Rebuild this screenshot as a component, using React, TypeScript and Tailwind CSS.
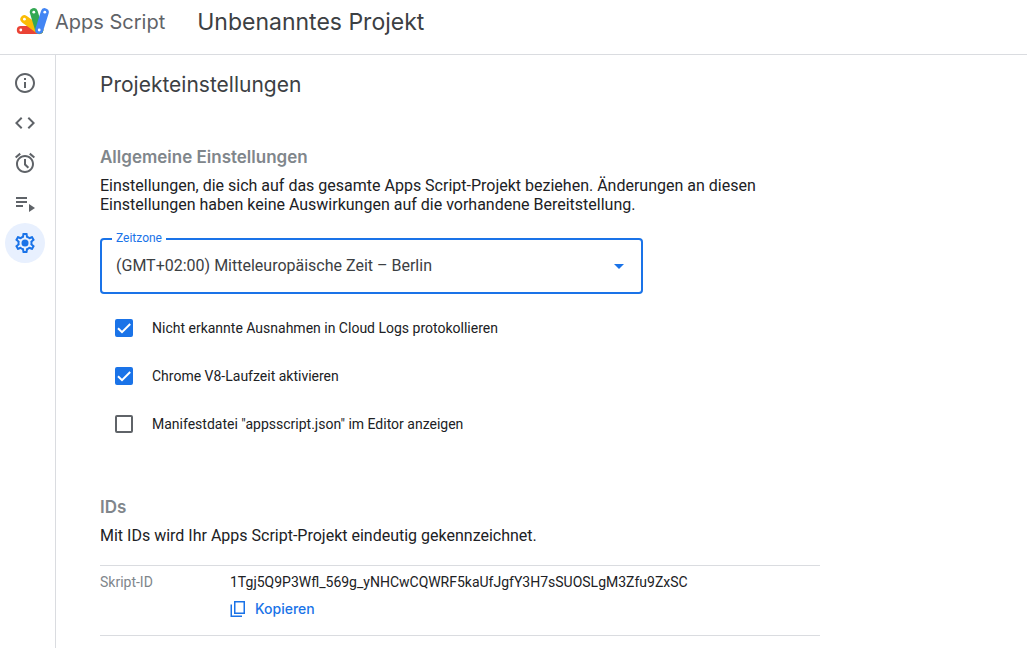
import { useState } from "react";
import type { ReactNode } from "react";

function Icon({ children, className = "size-6" }: { children: ReactNode; className?: string }) {
  return (
    <svg viewBox="0 0 24 24" fill="currentColor" aria-hidden="true" className={className}>
      {children}
    </svg>
  );
}

function Logo() {
  return (
    <svg viewBox="0 0 34 28" className="h-7 w-[34px]" aria-hidden="true">
      <g strokeLinecap="round" strokeWidth="8" fill="none">
        <path d="M4.8 22H23.2" stroke="#ea4335" />
        <path d="M8.4 11.2L23.2 22" stroke="#fbbc04" />
        <path d="M17.8 4.2L23.2 22" stroke="#34a853" />
        <path d="M28.8 4.2L23.2 22" stroke="#4285f4" />
      </g>
      <g fill="#fff">
        <circle cx="4.8" cy="22" r="1.4" />
        <circle cx="8.4" cy="11.2" r="1.4" />
        <circle cx="17.8" cy="4.2" r="1.4" />
        <circle cx="28.8" cy="4.2" r="1.4" />
        <circle cx="23.2" cy="22" r="1.4" />
      </g>
    </svg>
  );
}

const navItems = [
  {
    label: "Übersicht",
    icon: <path d="M11 7h2v2h-2zm0 4h2v6h-2zm1-9C6.48 2 2 6.48 2 12s4.48 10 10 10 10-4.48 10-10S17.52 2 12 2zm0 18c-4.41 0-8-3.59-8-8s3.59-8 8-8 8 3.59 8 8-3.59 8-8 8z" />,
  },
  {
    label: "Editor",
    icon: <path d="M9.4 16.6L4.8 12l4.6-4.6L8 6l-6 6 6 6 1.4-1.4zm5.2 0l4.6-4.6-4.6-4.6L16 6l6 6-6 6-1.4-1.4z" />,
  },
  {
    label: "Trigger",
    icon: <path d="M22 5.72l-4.6-3.86-1.29 1.53 4.6 3.86L22 5.72zM7.88 3.39L6.6 1.86 2 5.71l1.29 1.53 4.59-3.85zM13 8h-2v6l3.7 3.4 1.4-1.4L13 13V8zM12 4c-4.97 0-9 4.03-9 9s4.02 9 9 9c4.97 0 9-4.03 9-9s-4.03-9-9-9zm0 16c-3.87 0-7-3.13-7-7s3.13-7 7-7 7 3.13 7 7-3.13 7-7 7z" />,
  },
  {
    label: "Ausführungen",
    icon: <path d="M3 6h11v2H3zM3 10h11v2H3zM3 14h7v2H3zM16 13l6 4-6 4z" />,
  },
  {
    label: "Projekteinstellungen",
    active: true,
    icon: (
      <>
        <path d="M19.43 12.98c.04-.32.07-.64.07-.98 0-.34-.03-.66-.07-.98l2.11-1.65c.19-.15.24-.42.12-.64l-2-3.46c-.09-.16-.26-.25-.44-.25-.06 0-.12.01-.17.03l-2.49 1c-.52-.4-1.08-.73-1.69-.98l-.38-2.65C14.46 2.18 14.25 2 14 2h-4c-.25 0-.46.18-.49.42l-.38 2.65c-.61.25-1.17.59-1.69.98l-2.49-1c-.06-.02-.12-.03-.18-.03-.17 0-.34.09-.43.25l-2 3.46c-.13.22-.07.49.12.64l2.11 1.65c-.04.32-.07.65-.07.98 0 .33.03.66.07.98l-2.11 1.65c-.19.15-.24.42-.12.64l2 3.46c.09.16.26.25.44.25.06 0 .12-.01.17-.03l2.49-1c.52.4 1.08.73 1.69.98l.38 2.65c.03.24.24.42.49.42h4c.25 0 .46-.18.49-.42l.38-2.65c.61-.25 1.17-.59 1.69-.98l2.49 1c.06.02.12.03.18.03.17 0 .34-.09.43-.25l2-3.46c.12-.22.07-.49-.12-.64l-2.11-1.65zm-1.98-1.71c.04.31.05.52.05.73 0 .21-.02.43-.05.73l-.14 1.13.89.7 1.08.84-.7 1.21-1.27-.51-1.04-.42-.9.68c-.43.32-.84.56-1.25.73l-1.06.43-.16 1.13-.2 1.35h-1.4l-.19-1.35-.16-1.13-1.06-.43c-.43-.18-.83-.41-1.23-.71l-.91-.7-1.06.43-1.27.51-.7-1.21 1.08-.84.89-.7-.14-1.13c-.03-.31-.05-.54-.05-.74s.02-.43.05-.73l.14-1.13-.89-.7-1.08-.84.7-1.21 1.27.51 1.04.42.9-.68c.43-.32.84-.56 1.25-.73l1.06-.43.16-1.13.2-1.35h1.39l.19 1.35.16 1.13 1.06.43c.43.18.83.41 1.23.71l.91.7 1.06-.43 1.27-.51.7 1.21-1.07.85-.89.7.14 1.13z" />
        <circle cx="12" cy="12" r="3.5" />
      </>
    ),
  },
];

function Check({ label, initial }: { label: string; initial: boolean }) {
  const [checked, setChecked] = useState(initial);
  return (
    <label className="flex h-12 items-center text-sm text-[#202124]">
      <span className="mr-[19px] grid size-[18px]">
        <input
          type="checkbox"
          checked={checked}
          onChange={(e) => setChecked(e.target.checked)}
          className="col-start-1 row-start-1 size-[18px] appearance-none rounded-xs border-2 border-[#5f6368] checked:border-[#1a73e8] checked:bg-[#1a73e8]"
        />
        {checked && (
          <svg viewBox="0 0 18 18" fill="none" stroke="#fff" strokeWidth="2" aria-hidden="true" className="pointer-events-none col-start-1 row-start-1 size-[18px]">
            <path d="M3 9.2L7 13.2L15.2 5" />
          </svg>
        )}
      </span>
      {label}
    </label>
  );
}

export default function App() {
  return (
    <div className="flex min-h-screen flex-col bg-white font-[Roboto,sans-serif] text-[#202124]">
      <header className="flex h-[55px] items-start border-b border-[#dadce0] pt-2 font-[Inter,sans-serif]">
        <a href="#" className="flex items-center pl-4 text-[#5f6368]">
          <Logo />
          <span className="ml-[5px] text-xl leading-7 whitespace-nowrap">Apps Script</span>
        </a>
        <h1 className="pl-8 text-[23px] leading-7 whitespace-nowrap text-[#3c4043]">Unbenanntes Projekt</h1>
      </header>
      <div className="flex flex-1">
        <nav className="w-14 shrink-0 border-r border-[#dadce0] pt-2 pl-[5px]">
          {navItems.map((item) => (
            <a
              key={item.label}
              href="#"
              aria-label={item.label}
              aria-current={item.active ? "page" : undefined}
              className={`flex size-10 items-center justify-center rounded-full ${item.active ? "bg-[#e8f0fe] text-[#1a73e8]" : "text-[#5f6368]"}`}
            >
              <Icon>{item.icon}</Icon>
            </a>
          ))}
        </nav>
        <main className="min-w-0 flex-1 px-11 pt-4">
          <div className="max-w-[720px]">
            <h2 className="font-[Inter,sans-serif] text-[21px] leading-7 text-[#3c4043]">Projekteinstellungen</h2>
            <section className="pt-[46px]">
              <h3 className="font-[Inter,sans-serif] text-[17px] leading-6 font-semibold text-[#80868b]">Allgemeine Einstellungen</h3>
              <p className="mt-[7px] max-w-[680px] text-base leading-[19px]">
                Einstellungen, die sich auf das gesamte Apps Script-Projekt beziehen. Änderungen an diesen Einstellungen haben keine Auswirkungen auf die vorhandene Bereitstellung.
              </p>
              <div className="relative mt-6 grid max-w-[543px] items-center">
                <label htmlFor="timezone" className="absolute -top-2 left-3 bg-white px-1 text-xs leading-4 text-[#1a73e8]">
                  Zeitzone
                </label>
                <select
                  id="timezone"
                  className="col-start-1 row-start-1 h-14 w-full appearance-none rounded border-2 border-[#1a73e8] bg-white pr-10 pl-3.5 text-base text-[#3c4043] outline-none"
                >
                  <option>(GMT+02:00) Mitteleuropäische Zeit – Berlin</option>
                </select>
                <Icon className="pointer-events-none col-start-1 row-start-1 mr-3 size-6 justify-self-end text-[#1a73e8]">
                  <path d="M7 10l5 5 5-5z" />
                </Icon>
              </div>
              <div className="mt-2.5 pl-[15px]">
                <Check label="Nicht erkannte Ausnahmen in Cloud Logs protokollieren" initial />
                <Check label="Chrome V8-Laufzeit aktivieren" initial />
                <Check label={'Manifestdatei "appsscript.json" im Editor anzeigen'} initial={false} />
              </div>
            </section>
            <section className="pt-[47px]">
              <h3 className="font-[Inter,sans-serif] text-[17px] leading-6 font-semibold text-[#80868b]">IDs</h3>
              <p className="mt-[7px] text-base leading-[19px]">Mit IDs wird Ihr Apps Script-Projekt eindeutig gekennzeichnet.</p>
              <dl className="mt-5 flex border-y border-[#dadce0] pt-1.5 pb-4 text-sm leading-5">
                <dt className="w-[130px] shrink-0 text-[#80868b]">Skript-ID</dt>
                <dd className="min-w-0">
                  <span className="break-all">1Tgj5Q9P3Wfl_569g_yNHCwCQWRF5kaUfJgfY3H7sSUOSLgM3Zfu9ZxSC</span>
                  <button type="button" className="mt-[7px] flex items-center gap-[9px] font-[Inter,sans-serif] text-sm leading-5 font-medium text-[#1a73e8]">
                    <svg viewBox="0 0 16 18" fill="none" stroke="currentColor" strokeWidth="1.5" aria-hidden="true" className="h-[18px] w-4">
                      <path d="M4.75 1.75h9.5v11.5h-9.5zM1.25 4.5v11.75H12" />
                    </svg>
                    Kopieren
                  </button>
                </dd>
              </dl>
            </section>
          </div>
        </main>
      </div>
    </div>
  );
}
